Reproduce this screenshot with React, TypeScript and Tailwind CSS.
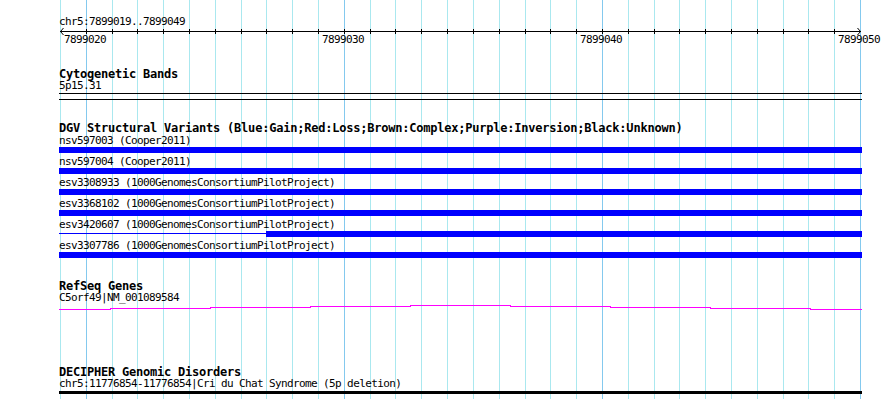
import React from "react";

const PX_PER_BP = 800 / 31;
const gridX = Array.from({ length: 32 }, (_, k) => Math.round(60 + k * PX_PER_BP));
const majorK = new Set([1, 11, 21, 31]);

function Grid() {
  return (
    <svg className="absolute inset-0" width={890} height={399} viewBox="0 0 890 399">
      {gridX.map((x, k) => (
        <line
          key={k}
          x1={x + 0.5}
          x2={x + 0.5}
          y1={0}
          y2={399}
          stroke={majorK.has(k) ? "#84c9ee" : "#aae8ef"}
          strokeWidth={1}
        />
      ))}
    </svg>
  );
}

function Txt({ children, className = "" }: { children: React.ReactNode; className?: string }) {
  return (
    <div className={"h-[12px] pl-[59px] text-[11px] leading-[12px] tracking-[-0.62px] whitespace-pre " + className}>
      {children}
    </div>
  );
}

function Bold({ children, className = "" }: { children: React.ReactNode; className?: string }) {
  return (
    <div className={"h-[12px] pl-[59px] text-[12px] font-bold leading-[12px] tracking-[-0.22px] whitespace-pre " + className}>
      {children}
    </div>
  );
}

function Ruler() {
  return (
    <svg width={890} height={6} viewBox="0 28 890 6" className="block overflow-visible">
      <line x1={60} x2={861} y1={31.5} y2={31.5} stroke="#000" strokeWidth={1} />
      {gridX.slice(1, 31).map((x, i) => (
        <line key={i} x1={x + 0.5} x2={x + 0.5} y1={29} y2={34} stroke="#000" strokeWidth={1} />
      ))}
      <polyline points="63.5,28 60.5,31.5 63.5,35" fill="none" stroke="#000" strokeWidth={1} />
      <polyline points="857.5,28 860.5,31.5 857.5,35" fill="none" stroke="#000" strokeWidth={1} />
    </svg>
  );
}

const rulerLabels = [
  { text: "7899020", x: 65 },
  { text: "7899030", x: 323 },
  { text: "7899040", x: 581 },
  { text: "7899050", x: 839 },
];

const dgvRows = [
  "nsv597003 (Cooper2011)",
  "nsv597004 (Cooper2011)",
  "esv3308933 (1000GenomesConsortiumPilotProject)",
  "esv3368102 (1000GenomesConsortiumPilotProject)",
  "esv3420607 (1000GenomesConsortiumPilotProject)",
  "esv3307786 (1000GenomesConsortiumPilotProject)",
];

const waveSegs: [number, number, number][] = [
  [59, 110, 309],
  [110, 210, 308],
  [210, 310, 307],
  [310, 410, 306],
  [410, 510, 305],
  [510, 610, 306],
  [610, 710, 307],
  [710, 810, 308],
  [810, 861, 309],
];

function Wave() {
  return (
    <svg width={890} height={6} viewBox="0 304 890 6" className="block">
      {waveSegs.map(([a, b, y], i) => (
        <rect key={i} x={a} y={y} width={b - a + 1} height={1} fill="#ff00ff" />
      ))}
    </svg>
  );
}

export default function App() {
  return (
    <div className="relative h-[399px] w-[890px] overflow-hidden bg-white font-['DejaVu_Sans_Mono',monospace] text-black">
      <Grid />
      <div className="relative flex flex-col">
        <Txt className="mt-[16px]">chr5:7899019..7899049</Txt>
        <Ruler />
        <div className="relative h-[12px]">
          {rulerLabels.map((l) => (
            <span
              key={l.text}
              className="absolute top-0 text-[11px] leading-[12px] tracking-[-0.62px]"
              style={{ left: l.x - 1 }}
            >
              {l.text}
            </span>
          ))}
        </div>

        <Bold className="mt-[22px]">Cytogenetic Bands</Bold>
        <Txt>5p15.31</Txt>
        <div className="ml-[59px] mt-px h-[7px] w-[803px] border-y border-black" />

        <Bold className="mt-[22px]">
          DGV Structural Variants (Blue:Gain;Red:Loss;Brown:Complex;Purple:Inversion;Black:Unknown)
        </Bold>
        <div className="mt-px flex flex-col gap-[3px]">
          {dgvRows.map((r, i) => (
            <div key={i} className="flex flex-col">
              <Txt>{r}</Txt>
              {i === 4 ? (
                <div className="ml-[59px] flex h-[6px] w-[803px]">
                  <div className="flex w-[207px] flex-col pt-[2px]">
                    <div className="h-px bg-[#0000ff]" />
                  </div>
                  <div className="h-[6px] flex-1 bg-[#0000ff]" />
                </div>
              ) : (
                <div className="ml-[59px] h-[6px] w-[803px] bg-[#0000ff]" />
              )}
            </div>
          ))}
        </div>

        <Bold className="mt-[22px]">RefSeq Genes</Bold>
        <Txt>C5orf49|NM_001089584</Txt>
        <Wave />

        <Bold className="mt-[56px]">DECIPHER Genomic Disorders</Bold>
        <Txt>chr5:11776854-11776854|Cri du Chat Syndrome (5p deletion)</Txt>
        <div className="ml-[59px] mt-px h-[3px] w-[803px] bg-black" />
      </div>
    </div>
  );
}
